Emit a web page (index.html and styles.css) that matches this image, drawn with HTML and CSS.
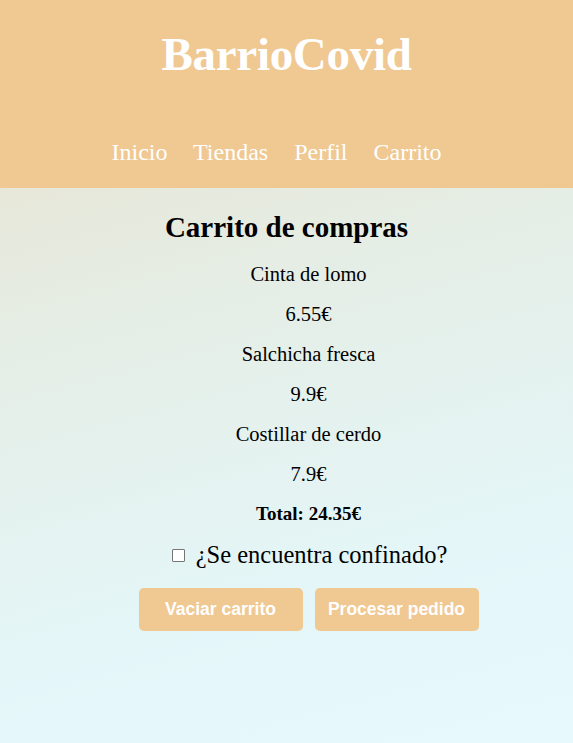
FILE: index.html
```html
<!DOCTYPE html>
<html lang="es">
<head>
<meta charset="utf-8">
<title>BarrioCovid</title>
<link rel="stylesheet" href="styles.css">
</head>
<body>
<header class="header">
  <h1 class="brand">BarrioCovid</h1>
  <nav class="nav">
    <a class="nav-link" href="#">Inicio</a>
    <a class="nav-link" href="#">Tiendas</a>
    <a class="nav-link" href="#">Perfil</a>
    <a class="nav-link" href="#">Carrito</a>
  </nav>
</header>
<main class="main">
  <h2 class="title">Carrito de compras</h2>
  <div class="cart">
    <p class="line">Cinta de lomo</p>
    <p class="line">6.55€</p>
    <p class="line">Salchicha fresca</p>
    <p class="line">9.9€</p>
    <p class="line">Costillar de cerdo</p>
    <p class="line">7.9€</p>
    <p class="line total">Total: 24.35€</p>
    <label class="confined"><span class="box"></span>¿Se encuentra confinado?</label>
    <div class="actions">
      <button class="btn">Vaciar carrito</button>
      <button class="btn">Procesar pedido</button>
    </div>
  </div>
</main>
</body>
</html>
```
FILE: styles.css
```css
html, body {
  margin: 0;
  padding: 0;
  height: 100%;
}
body {
  font-family: "Liberation Serif", "DejaVu Serif", serif;
  color: #000;
  background: linear-gradient(165deg, #e9e0cb 0%, #e5eee6 40%, #e4f6f8 75%, #e7f9fc 100%);
}
.header {
  background: #f0c891;
  height: 188px;
  text-align: center;
  color: #fff;
  overflow: hidden;
}
.brand {
  margin: 0;
  padding-top: 27px;
  font-size: 47px;
  line-height: 54px;
  font-weight: bold;
  letter-spacing: -0.3px;
}
.nav {
  margin-top: 56px;
  font-size: 24px;
  line-height: 30px;
}
.nav-link {
  color: #fff;
  text-decoration: none;
  margin-right: 20px;
}
.main {
  text-align: center;
}
.title {
  margin: 0;
  padding-top: 22px;
  font-size: 29px;
  line-height: 34px;
  font-weight: bold;
}
.cart {
  padding-left: 44px;
  padding-top: 19px;
}
.line {
  margin: 0 0 18px;
  font-size: 20.5px;
  line-height: 22px;
}
.total {
  font-weight: bold;
  font-size: 19px;
  margin-bottom: 15px;
}
.confined {
  display: flex;
  justify-content: center;
  align-items: center;
  gap: 11px;
  font-size: 24.5px;
  line-height: 30px;
  padding-left: 2px;
}
.box {
  width: 11px;
  height: 11px;
  border: 1px solid #767676;
  background: #fff;
  border-radius: 1px;
}
.actions {
  display: flex;
  justify-content: center;
  gap: 12px;
  margin-top: 18px;
}
.btn {
  width: 164px;
  height: 43px;
  border: none;
  border-radius: 5px;
  background: #f0c891;
  color: #fff;
  font-family: "Liberation Sans", Arial, sans-serif;
  font-size: 17.5px;
  font-weight: bold;
  padding: 0;
}
```
